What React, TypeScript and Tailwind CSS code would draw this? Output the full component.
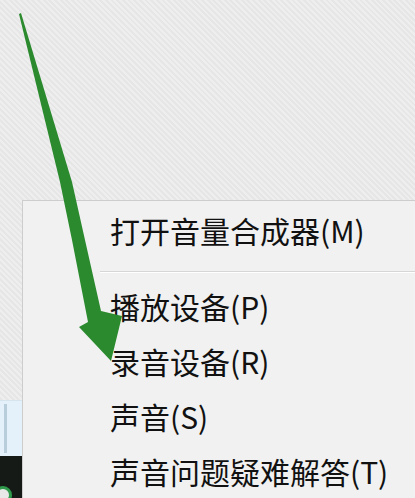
const items = ['播放设备(P)', '录音设备(R)', '声音(S)', '声音问题疑难解答(T)'];

function Arrow() {
  return (
    <svg
      className="absolute left-0 top-0 pointer-events-none"
      width="415"
      height="498"
      viewBox="0 0 415 498"
    >
      <polygon
        fill="#2b8a2e"
        points="19,14 21,13 72,182 85,240 101,311 122,316 111,361 79,327 88,322 72,240 60,182"
      />
    </svg>
  );
}

export default function App() {
  return (
    <div className="relative w-[415px] h-[498px] overflow-hidden flex bg-[repeating-linear-gradient(45deg,#eeeeee_0px,#eeeeee_2px,#e6e6e6_2px,#e6e6e6_4px)] font-['Noto_Sans_CJK_SC','Noto_Sans',sans-serif]">
      {/* taskbar edge */}
      <div className="w-[22px] flex flex-col">
        <div className="flex-1" />
        <div className="h-[56px] bg-[#e4f1fa] border-t border-[#d6e4ee] pl-[4px] py-[3px]">
          <div className="w-[3px] h-full bg-[#b8cfdb]" />
        </div>
        <div className="relative h-[42px] bg-[#161a17] overflow-hidden">
          <div className="absolute -left-[6px] top-[30px] w-[18px] h-[18px] rounded-full border-[3px] border-[#2f9a4b] bg-[#e8e8e8]" />
        </div>
      </div>

      {/* context menu */}
      <div className="mt-[200px] flex-1 bg-[#f1f1f1] border-l border-t border-[#cdcdcd] pt-[1px] text-[30px] leading-none text-[#111]">
        <div className="h-[56px] flex items-center pl-[87px] whitespace-nowrap">打开音量合成器(M)</div>
        <div className="pt-[13px] pb-[5px] pl-[77px]">
          <div className="h-px bg-[#d6d6d6]" />
          <div className="h-px bg-white" />
        </div>
        {items.map((t) => (
          <div key={t} className="h-[55px] flex items-center pl-[87px] whitespace-nowrap">
            {t}
          </div>
        ))}
      </div>

      <Arrow />
    </div>
  );
}
